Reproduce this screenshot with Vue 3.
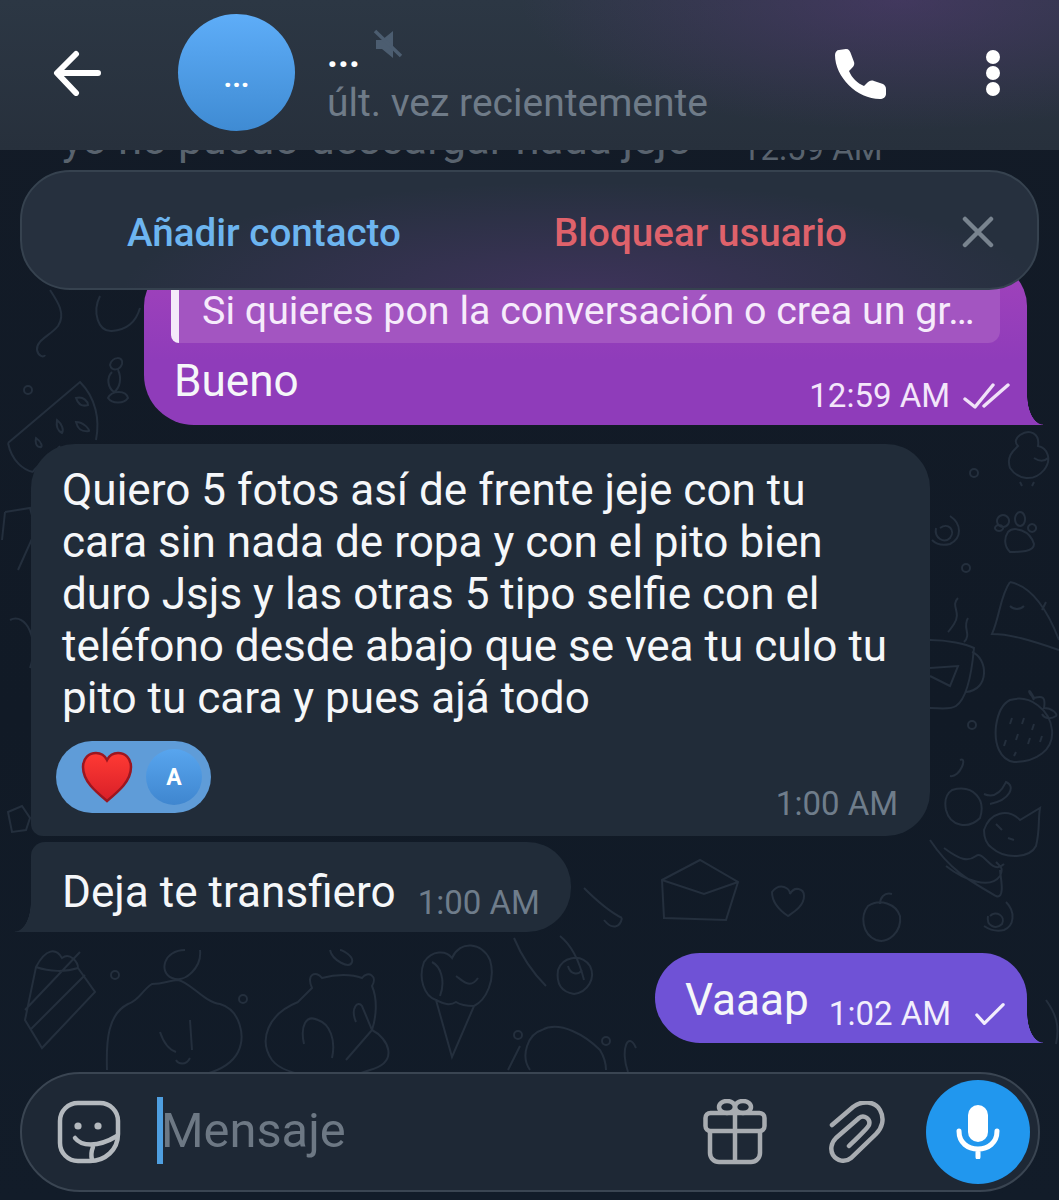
<script setup>
// background doodles, page coordinates
const doodles = [
  // watermelon
  'M8 443 L80 382 C96 398 100 420 96 440 M8 443 C12 462 24 470 33 472 M33 472 C36 466 52 456 60 446',
  'M76 398 C84 396 88 402 88 405 C82 407 78 404 76 398Z M57 420 C62 424 64 430 62 433 C58 431 56 426 57 420Z M76 422 C84 422 90 430 89 431 C82 432 78 430 76 422Z M36 438 C42 442 43 448 40 447 C36 447 35 442 36 438Z',
  // candy
  'M110 365 C112 356 124 356 122 364 C120 370 112 372 110 365Z M112 372 C106 378 108 388 114 392 C120 388 122 378 118 370 M108 398 C112 390 126 390 128 398 C124 404 112 404 108 398Z',
  // squiggle and balloon
  'M50 290 C58 302 66 314 58 326 C50 336 36 340 37 350 C38 356 44 358 45 355',
  'M100 296 C92 312 98 332 112 331 C126 330 136 322 140 308',
  // pencil
  'M5 512 L30 508 L36 530 L18 570 M5 512 L2 540',
  // duck
  'M1020 435 C1030 428 1040 434 1038 446 C1048 448 1052 460 1044 470 C1034 482 1018 480 1010 468 C1006 456 1014 450 1018 446 C1014 442 1016 438 1020 435Z M1020 482 L1022 486 M1034 482 L1032 486 M1034 458 C1040 462 1044 462 1048 458',
  // paw
  'M1008 532 C1014 526 1030 530 1034 544 C1034 552 1020 552 1010 552 C1004 546 1004 538 1008 532Z M1003 515 a6 6 0 1 0 .1 0Z M1020 512 a5 7 0 1 0 .1 0Z M1032 524 a4 4 0 1 0 .1 0Z M999 525 a4 3 0 1 0 .1 0Z',
  // spirals
  'M940 528 C948 522 956 530 950 538 C944 544 934 538 936 528 M950 516 C962 524 962 538 950 544 C942 546 936 544 932 540',
  'M990 916 C996 910 1006 916 1002 924 C996 930 986 926 988 916 M1006 902 C1016 912 1014 926 1004 930 C996 932 990 930 984 926',
  // fish
  'M1010 582 C1000 596 1000 616 992 634 C1010 634 1030 640 1059 650 M1010 582 C1030 586 1046 606 1059 640 M1010 606 C1014 610 1020 610 1024 606 M1046 602 L1042 610',
  // mug and steam
  'M930 640 C948 640 966 644 974 648 C972 670 968 698 956 706 C950 710 940 708 930 708 M972 652 C988 658 990 690 966 692 M930 668 L958 666 L950 686 L930 676 M958 598 C950 606 962 612 954 624 C950 630 948 632 948 632 M968 618 C962 628 972 634 964 642',
  // strawberry
  'M1010 700 C1030 694 1050 710 1052 730 C1054 750 1036 762 1014 762 C1000 760 994 744 996 726 C998 712 1002 704 1010 700Z M1034 700 L1032 696 C1028 692 1028 686 1034 698 C1042 696 1046 696 1044 708 C1052 708 1058 714 1056 716 C1050 720 1044 718 1042 714 M1012 718 L1010 724 M1024 718 L1022 724 M1034 724 L1032 730 M1018 734 L1016 740 M1030 738 L1028 744 M1006 740 L1004 746 M1042 736 L1040 742 M1016 752 L1014 756',
  // sleeping cat and friends
  'M952 790 C974 784 986 800 980 818 C968 830 950 826 946 810 C944 800 946 794 952 790Z M960 760 C968 756 960 778 950 776 M984 794 C998 800 1004 786 1006 782 C1016 786 1010 800 990 804',
  'M984 830 C990 812 1008 808 1020 820 L1040 808 C1038 820 1040 830 1036 846 C1030 858 1006 860 992 848 C986 844 984 838 984 830Z M996 824 L1002 830 M1008 838 L1014 840 M944 848 C960 860 968 862 976 856 C984 850 992 876 1004 864 M946 866 C964 880 990 890 1000 876 C1004 868 1000 866 996 862 M930 840 C950 870 968 880 996 896 C1006 900 1000 874 1000 870',
  // envelope, heart, peach, star on the right of the short bubble
  'M662 880 L700 860 L738 882 L726 920 L664 918Z M662 880 L704 894 L738 882',
  'M772 892 C780 882 790 888 790 894 C794 886 804 888 804 896 C804 906 794 912 788 916 C782 912 772 904 772 892Z',
  'M868 906 C880 898 896 904 900 916 C902 932 888 944 876 940 C862 934 860 916 868 906Z M880 904 C880 898 884 892 892 894',
  'M8 812 L22 806 L30 818 L26 830 L12 832 L10 822Z',
  // cake
  'M36 967 C46 948 56 948 62 958 C70 952 78 962 78 968 L95 992 L42 1048 L25 1020 L36 967Z M36 967 C50 972 66 972 78 968 M25 1010 L80 952 M30 1030 L85 975',
  // cloud with face
  'M107 1070 C106 1040 108 1014 128 1004 C140 1000 142 990 152 984 C164 984 170 980 178 980 C190 982 204 1002 220 1004 C240 1010 246 1036 238 1052 C232 1064 220 1070 206 1074 M160 1032 C164 1044 170 1050 176 1052 M176 1060 C178 1064 186 1066 190 1058 M190 1020 L192 1050',
  // capybara on a ring
  'M312 988 C306 974 316 970 322 978 C336 974 352 974 362 978 C368 970 378 976 372 986 C378 1000 376 1018 372 1030 C388 1038 400 1062 370 1070 C340 1082 286 1078 272 1060 C258 1040 268 1014 298 1002 L312 988Z M304 1044 C300 1026 306 1014 318 1020 C330 1024 336 1040 332 1058 M356 1022 C350 1008 358 1000 362 1006 L372 1030 L346 1060',
  // ice cream
  'M436 1000 C424 996 418 978 424 962 C432 950 446 950 452 958 C460 940 482 942 490 960 C496 980 486 1000 474 1006 L452 1057 L436 1000Z M436 1000 C444 1004 450 1006 456 1002 C462 1006 468 1006 474 1006 M432 962 C440 966 446 980 440 996 M456 976 C462 980 470 990 478 978',
  // apple, tail and carrot
  'M558 970 C562 958 580 952 590 966 C596 978 588 992 574 994 C562 992 556 984 558 970Z M568 966 C570 974 578 976 582 970 M514 938 C524 962 536 976 546 986 M560 936 C570 944 578 956 584 980 M584 888 C596 900 610 912 622 918 M604 920 C612 930 620 928 622 918',
  // peach and shapes near the bottom
  'M185 950 C164 950 158 972 172 978 C186 984 202 966 200 950 M330 950 C332 960 350 970 352 962 C354 956 342 950 340 950',
  'M530 1070 C520 1056 528 1034 542 1030 C560 1020 586 1036 600 1050 C606 1060 606 1066 606 1070 M520 1046 L508 1070',
  // leaf on the right edge
  'M636 1048 C628 1030 620 1050 628 1072 M1046 1000 C1056 1014 1060 1026 1056 1044',
  'M10 620 C26 612 40 640 30 668',
]
const dots = [
  [28, 390], [115, 975], [243, 999], [417, 1078], [518, 1035], [606, 1041], [974, 473], [966, 568], [972, 725],
]
</script>

<template>
  <div class="page">
    <svg class="wallpaper" viewBox="0 0 1059 1200" fill="none" stroke="#242f3d" stroke-width="2">
      <path v-for="(d, i) in doodles" :key="i" :d="d" />
      <circle v-for="(c, i) in dots" :key="'c' + i" :cx="c[0]" :cy="c[1]" r="4" />
    </svg>

    <header class="header">
      <button class="icon-btn back">
        <svg width="50" height="46" viewBox="0 0 50 46" fill="none" stroke="#fff" stroke-width="6" stroke-linecap="round" stroke-linejoin="round">
          <path d="M46 23 H6 M24 4 L5 23 L24 43" />
        </svg>
      </button>
      <div class="avatar">...</div>
      <div class="who">
        <div class="name-row">
          <span class="name">...</span>
          <svg class="muted" width="30" height="32" viewBox="0 0 30 32" fill="#4c5d70">
            <path d="M3 12 H9 L20 3 V30 L9 21 H3Z" />
            <path d="M2 3 L28 28" stroke="#4c5d70" stroke-width="3.5" />
          </svg>
        </div>
        <div class="status">últ. vez recientemente</div>
      </div>
      <svg class="phone" width="52" height="50" viewBox="0 0 52 50" fill="#fff">
        <path d="M4 1 L11 0 C14 0 15 2 16 5 L19 13 C20 16 18 18 16 20 L14 22 C17 29 22 34 29 37 L32 34 C34 32 36 31 39 32 L48 35 C50 36 51 38 51 40 V45 C51 48 48 50 45 50 C22 50 0 28 0 6 C0 3 2 1 4 1Z" />
      </svg>
      <div class="menu"><i></i><i></i><i></i></div>
    </header>

    <main class="chat">
      <div class="faded">
        <span>yo no puedo descargar nada jeje</span>
        <span class="faded-time">12:59 AM</span>
      </div>

      <div class="bubble out purple">
        <div class="reply">Si quieres pon la conversación o crea un gr…</div>
        <div class="purple-row">
          <span class="text">Bueno</span>
          <span class="meta">
            <span class="time">12:59 AM</span>
            <svg width="47" height="26" viewBox="0 0 47 26" fill="none" stroke="#f0e2f8" stroke-width="3.4" stroke-linecap="round" stroke-linejoin="round">
              <path d="M2 16 L12 24 L30 2 M21 23 L45 2" />
            </svg>
          </span>
        </div>
      </div>

      <div class="bubble in big">
        <p class="text">Quiero 5 fotos así de frente jeje con tu<br>cara sin nada de ropa y con el pito bien<br>duro Jsjs y las otras 5 tipo selfie con el<br>teléfono desde abajo que se vea tu culo tu<br>pito tu cara y pues ajá todo</p>
        <div class="reaction-row">
          <div class="reaction">
            <svg width="52" height="52" viewBox="0 0 52 52">
              <defs>
                <linearGradient id="heart" x1="0" y1="0" x2="0" y2="1">
                  <stop offset="0" stop-color="#ff3a34" />
                  <stop offset="1" stop-color="#d81f28" />
                </linearGradient>
              </defs>
              <path d="M26 50 C14 40 2 30 2 16 C2 7 8 2 15 2 C20 2 24 5 26 9 C28 5 32 2 37 2 C44 2 50 7 50 16 C50 30 38 40 26 50Z" fill="url(#heart)" stroke="#9c1620" stroke-width="2.5" />
            </svg>
            <span class="mini-avatar">A</span>
          </div>
          <span class="time">1:00 AM</span>
        </div>
      </div>

      <div class="bubble in short tail-left">
        <span class="text">Deja te transfiero</span>
        <span class="time">1:00 AM</span>
      </div>

      <div class="bubble out violet">
        <span class="text">Vaaap</span>
        <span class="meta">
          <span class="time">1:02 AM</span>
          <svg width="30" height="24" viewBox="0 0 32 24" fill="none" stroke="#f2eefc" stroke-width="3.4" stroke-linecap="round" stroke-linejoin="round">
            <path d="M2 13 L10 22 L30 2" />
          </svg>
        </span>
      </div>
    </main>

    <div class="composer">
      <svg width="64" height="64" viewBox="0 0 64 64" fill="none" stroke="#b4b9be" stroke-width="4.5" stroke-linecap="round">
        <path d="M21 3 H43 A18 18 0 0 1 61 21 V34 C61 50 48 61 33 61 H21 A18 18 0 0 1 3 43 V21 A18 18 0 0 1 21 3Z" />
        <path d="M18 38 C24 46 40 48 60 36 M36 47 C34 52 34 56 35 60" />
        <circle cx="21" cy="26" r="3.6" fill="#b4b9be" stroke="none" />
        <circle cx="41" cy="26" r="3.6" fill="#b4b9be" stroke="none" />
      </svg>
      <div class="input">
        <span class="caret"></span>
        <span class="placeholder">Mensaje</span>
      </div>
      <svg class="gift" width="64" height="66" viewBox="0 0 64 66" fill="none" stroke="#a8acb1" stroke-width="4.5" stroke-linejoin="round">
        <rect x="2.5" y="14" width="59" height="18" rx="5" />
        <path d="M7 32 V54 A9 9 0 0 0 16 63 H48 A9 9 0 0 0 57 54 V32 M32 14 V63" />
        <ellipse cx="24" cy="8" rx="8" ry="6" />
        <ellipse cx="40" cy="8" rx="8" ry="6" />
      </svg>
      <svg class="clip" width="56" height="63" viewBox="0 0 56 63" fill="none" stroke="#a8acb1" stroke-width="4.5" stroke-linecap="round">
        <path d="M3 24 L24 6 C33 -1 46 0 51 9 C56 18 53 27 47 33 L22 57 C16 62 8 60 4 54 C1 49 2 42 7 37 L30 17 C35 13 42 18 40 24 C39 27 21 44 20 45" />
      </svg>
      <div class="mic">
        <svg width="44" height="54" viewBox="0 0 44 54" fill="none" stroke="#fff" stroke-width="5" stroke-linecap="round">
          <rect x="12" y="0" width="20" height="37" rx="10" fill="#fff" stroke="none" />
          <path d="M3 26 C3 38 12 44 22 44 C32 44 41 38 41 26 M22 44 V52" />
        </svg>
      </div>
    </div>

    <div class="contact-bar">
      <span class="add">Añadir contacto</span>
      <span class="block">Bloquear usuario</span>
      <svg width="32" height="32" viewBox="0 0 32 32" fill="none" stroke="#79848f" stroke-width="4.5" stroke-linecap="round">
        <path d="M3 3 L29 29 M29 3 L3 29" />
      </svg>
    </div>
  </div>
</template>

<style scoped>
.page {
  position: relative;
  width: 1059px;
  height: 1200px;
  overflow: hidden;
  display: flex;
  flex-direction: column;
  background: linear-gradient(180deg, #131b27 0%, #111a26 60%, #121c29 100%);
  font-family: Roboto, "Liberation Sans", sans-serif;
  color: #f5f7f9;
}
.wallpaper {
  position: absolute;
  inset: 0;
  width: 1059px;
  height: 1200px;
}

.header {
  position: relative;
  z-index: 2;
  flex: 0 0 150px;
  display: flex;
  align-items: center;
  padding-left: 52px;
  background:
    radial-gradient(ellipse 380px 130px at 900px 0, rgba(96, 58, 130, 0.42), transparent),
    linear-gradient(180deg, #2c3744 0%, #27303c 100%);
}
.icon-btn {
  border: none;
  background: none;
  padding: 0;
  display: flex;
}
.back {
  margin-top: -4px;
}
.avatar {
  width: 117px;
  height: 117px;
  margin-left: 76px;
  margin-top: -5px;
  border-radius: 50%;
  background: linear-gradient(180deg, #5eadf8, #3f8bd3);
  display: flex;
  align-items: center;
  justify-content: center;
  font-size: 30px;
  font-weight: 700;
  color: #fff;
  padding-top: 8px;
  box-sizing: border-box;
}
.who {
  margin-left: 32px;
  margin-top: 10px;
}
.name-row {
  display: flex;
  align-items: flex-start;
  height: 46px;
}
.name {
  font-size: 38px;
  font-weight: 700;
  line-height: 30px;
  margin-top: 4px;
  color: #fff;
}
.muted {
  margin-left: 13px;
  margin-top: -7px;
}
.status {
  font-size: 39px;
  line-height: 44px;
  color: #6f7b88;
}
.phone {
  margin-left: auto;
  margin-top: -2px;
}
.menu {
  display: flex;
  flex-direction: column;
  gap: 2px;
  margin: -4px 59px 0 99px;
}
.menu i {
  width: 14px;
  height: 14px;
  border-radius: 50%;
  background: #fff;
}

.chat {
  position: relative;
  z-index: 1;
  flex: 1;
  min-height: 0;
  display: flex;
  flex-direction: column;
  justify-content: flex-end;
  align-items: flex-start;
  padding-bottom: 29px;
  overflow: hidden;
}
.faded {
  flex: none;
  display: flex;
  gap: 52px;
  margin-left: 62px;
  margin-bottom: 87px;
  font-size: 43.7px;
  line-height: 52px;
  color: #59636e;
}
.faded-time {
  font-size: 33px;
  padding-top: 10px;
}

.bubble {
  position: relative;
  flex: none;
  box-sizing: border-box;
}
.text {
  font-size: 44.1px;
  line-height: 52px;
  margin: 0;
  white-space: nowrap;
}
.time {
  font-size: 33px;
  line-height: 40px;
  white-space: nowrap;
  flex: none;
}
.meta {
  display: flex;
  align-items: center;
}
.out::after,
.tail-left::after {
  content: "";
  position: absolute;
  bottom: 0;
  width: 16px;
  height: 30px;
}

.purple {
  margin-left: 144px;
  width: 883px;
  padding: 11px 27px 18px;
  border-radius: 44px 44px 0 50px;
  background: linear-gradient(180deg, #a142bb, #8f3cba 60%);
}
.purple::after {
  right: -16px;
  background: radial-gradient(ellipse 16px 30px at 100% 0, transparent 97%, #8f3cba 100%);
}
.reply {
  height: 70px;
  box-sizing: border-box;
  padding: 16px 0 0 23px;
  border-left: 8px solid #f4e9fa;
  border-radius: 8px 12px 12px 8px;
  background: #a355c1;
  font-size: 39.4px;
  line-height: 44px;
  color: #f6ebfb;
  white-space: nowrap;
}
.purple-row {
  display: flex;
  justify-content: space-between;
  align-items: flex-end;
  margin-top: 12px;
  margin-right: -10px;
  padding-left: 3px;
}
.purple-row .meta {
  gap: 13px;
  margin-bottom: -9px;
  color: #f3e6fa;
}

.in {
  margin-left: 31px;
  background: #212c39;
}
.big {
  width: 899px;
  margin-top: 19px;
  padding: 20px 32px 23px 31px;
  border-radius: 44px 44px 44px 12px;
}
.reaction-row {
  display: flex;
  justify-content: space-between;
  align-items: flex-end;
  margin-top: 17px;
}
.reaction-row .time {
  margin-bottom: -11px;
}
.in .time {
  color: #6f7d8b;
}
.reaction {
  display: flex;
  align-items: center;
  width: 155px;
  height: 72px;
  margin-left: -6px;
  padding-left: 25px;
  box-sizing: border-box;
  border-radius: 36px;
  background: #5f9cd8;
}
.mini-avatar {
  width: 56px;
  height: 56px;
  margin-left: 13px;
  border-radius: 50%;
  background: linear-gradient(180deg, #58a5ee, #3f86cf);
  display: flex;
  align-items: center;
  justify-content: center;
  font-size: 23px;
  font-weight: 700;
  color: #fff;
}
.short {
  display: flex;
  align-items: flex-end;
  gap: 22px;
  width: 540px;
  margin-top: 6px;
  padding: 24px 32px 14px 31px;
  border-radius: 14px 44px 44px 0;
}
.short .time {
  margin-bottom: -5px;
}
.tail-left::after {
  left: -16px;
  background: radial-gradient(ellipse 16px 30px at 0 0, transparent 97%, #212c39 100%);
}
.violet {
  display: flex;
  align-items: flex-end;
  justify-content: space-between;
  width: 372px;
  margin-left: 655px;
  margin-top: 21px;
  padding: 21px 22px 17px 30px;
  border-radius: 45px 45px 0 45px;
  background: #6f52d6;
}
.violet .meta {
  gap: 24px;
  margin-bottom: -8px;
  color: #f2eefc;
}
.violet::after {
  right: -16px;
  background: radial-gradient(ellipse 16px 30px at 100% 0, transparent 97%, #6f52d6 100%);
}

.composer {
  position: relative;
  z-index: 1;
  flex: 0 0 120px;
  box-sizing: border-box;
  margin: 0 19px 8px 20px;
  padding: 0 8px 0 35px;
  display: flex;
  align-items: center;
  border: 2px solid #3a4552;
  border-radius: 60px;
  background: #1e2835;
}
.input {
  flex: 1;
  display: flex;
  align-items: center;
  margin-left: 36px;
  margin-top: -4px;
}
.caret {
  width: 6px;
  height: 67px;
  background: #4f9fe0;
}
.placeholder {
  font-size: 48.8px;
  color: #6d7884;
  margin-left: -2px;
}
.clip {
  margin-left: 62px;
}
.mic {
  width: 104px;
  height: 104px;
  margin-left: 41px;
  border-radius: 50%;
  background: #2197ee;
  display: flex;
  align-items: center;
  justify-content: center;
}

.contact-bar {
  position: absolute;
  z-index: 3;
  top: 170px;
  left: 20px;
  width: 1019px;
  height: 120px;
  box-sizing: border-box;
  display: flex;
  align-items: center;
  padding: 4px 0 0 105px;
  border: 2px solid #36424f;
  border-radius: 50px;
  background:
    radial-gradient(ellipse 460px 110px at 560px 120px, rgba(90, 55, 125, 0.45), transparent),
    #26303e;
  font-size: 38.6px;
  font-weight: 500;
}
.add {
  color: #6db5f0;
}
.block {
  margin-left: 153px;
  color: #df626b;
}
.contact-bar svg {
  margin-left: auto;
  margin-right: 43px;
}
</style>
